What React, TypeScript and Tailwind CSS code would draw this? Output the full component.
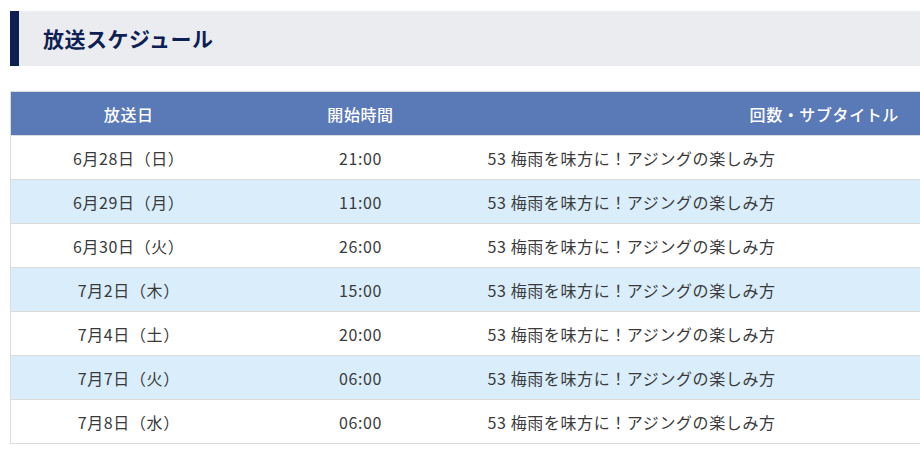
import React from "react";

const rows = [
  { date: "6月28日（日）", time: "21:00" },
  { date: "6月29日（月）", time: "11:00" },
  { date: "6月30日（火）", time: "26:00" },
  { date: "7月2日（木）", time: "15:00" },
  { date: "7月4日（土）", time: "20:00" },
  { date: "7月7日（火）", time: "06:00" },
  { date: "7月8日（水）", time: "06:00" },
];

const subtitle = "53 梅雨を味方に！アジングの楽しみ方";

export default function App() {
  return (
    <div
      className="w-[920px] h-[460px] overflow-hidden bg-white pt-[11px] pl-[10px]"
      style={{ fontFamily: '"Noto Sans CJK JP", "Noto Sans", sans-serif' }}
    >
      {/* 見出し */}
      <div className="w-[1000px] h-[55px] bg-[#ebecf0] border-l-[9px] border-[#0e1f54] flex items-center pl-[24px]">
        <h2 className="text-[21px] font-bold text-[#0e1f54] tracking-[0.5px]">放送スケジュール</h2>
      </div>

      {/* スケジュール表 */}
      <table className="mt-[25px] w-[1175px] border-collapse border border-[#dcdcdc] text-[16px] tracking-[0.6px] text-[#3a3a3a]">
        <thead>
          <tr className="bg-[#5a79b7] text-white h-[44px]">
            <th className="w-[236px] font-medium">放送日</th>
            <th className="w-[228px] font-medium">開始時間</th>
            <th className="font-medium pr-[10px]">回数・サブタイトル</th>
          </tr>
        </thead>
        <tbody>
          {rows.map((r, i) => (
            <tr
              key={i}
              className={`h-[44px] border-t border-[#dcdcdc] ${i % 2 === 1 ? "bg-[#d9edfa]" : "bg-white"}`}
            >
              <td className="text-center">{r.date}</td>
              <td className="text-center">{r.time}</td>
              <td className="pl-[13px]">{subtitle}</td>
            </tr>
          ))}
        </tbody>
      </table>
    </div>
  );
}
